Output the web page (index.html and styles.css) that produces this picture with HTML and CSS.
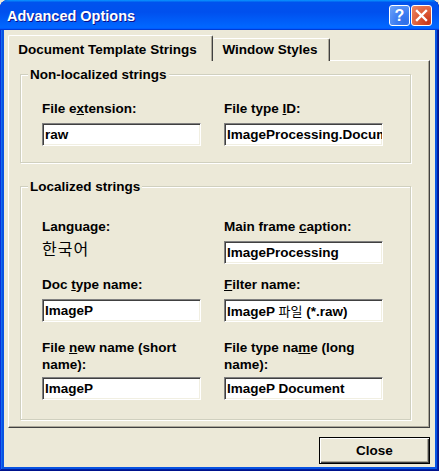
FILE: index.html
```html
<!DOCTYPE html>
<html>
<head>
<meta charset="utf-8">
<title>Advanced Options</title>
<link rel="stylesheet" href="styles.css">
</head>
<body>
<div class="window">
  <div class="titlebar">
    <span class="title">Advanced Options</span>
    <div class="caption-buttons">
      <span class="cbtn help">?</span>
      <span class="cbtn close"><svg width="21" height="21" viewBox="0 0 21 21"><path d="M6 6 L15 15 M15 6 L6 15" stroke="#fff" stroke-width="2.4" stroke-linecap="square" fill="none"/></svg></span>
    </div>
  </div>
  <div class="client">
    <div class="tabs">
      <div class="tab tab-active">Document Template Strings</div>
      <div class="tab tab-second">Window Styles</div>
    </div>
    <div class="panel">
      <fieldset class="group">
        <legend>Non-localized strings</legend>
        <div class="grid grid-top">
          <div class="field">
            <div class="label">File e<u>x</u>tension:</div>
            <div class="edit">raw</div>
          </div>
          <div class="field">
            <div class="label">File type <u>I</u>D:</div>
            <div class="edit">ImageProcessing.Document</div>
          </div>
        </div>
      </fieldset>
      <fieldset class="group group-second">
        <legend>Localized strings</legend>
        <div class="grid grid-bottom">
          <div class="field">
            <div class="label">Language:</div>
            <div class="lang">한국어</div>
          </div>
          <div class="field">
            <div class="label">Main frame <u>c</u>aption:</div>
            <div class="edit">ImageProcessing</div>
          </div>
          <div class="field">
            <div class="label">Doc <u>t</u>ype name:</div>
            <div class="edit">ImageP</div>
          </div>
          <div class="field">
            <div class="label"><u>F</u>ilter name:</div>
            <div class="edit">ImageP <span class="ko">파일</span> (*.raw)</div>
          </div>
          <div class="field field-tall">
            <div class="label label-two">File <u>n</u>ew name (short name):</div>
            <div class="edit">ImageP</div>
          </div>
          <div class="field field-tall">
            <div class="label label-two">File type na<u>m</u>e (long name):</div>
            <div class="edit">ImageP Document</div>
          </div>
        </div>
      </fieldset>
    </div>
    <div class="footer">
      <button class="btn" type="button">Close</button>
    </div>
  </div>
</div>
</body>
</html>
```

FILE: styles.css
```css
html, body {
  margin: 0;
  padding: 0;
  background: #ece9d8;
}

.window {
  width: 439px;
  height: 471px;
  box-sizing: border-box;
  display: flex;
  flex-direction: column;
  background: #0753e3;
  border-radius: 8px 8px 0 0;
  overflow: hidden;
  box-shadow: inset -1px -1px #00138c, inset 1px 1px #0831d9, inset -2px -2px #001ea0, inset 2px 2px #166aee;
}

.titlebar {
  flex: none;
  height: 30px;
  box-sizing: border-box;
  display: flex;
  align-items: center;
  justify-content: space-between;
  padding: 0 7px 0 7px;
  background: linear-gradient(180deg, #0997ff, #0053ee 8%, #0050ee 40%, #06f 88%, #06f 93%, #005bff 95%, #003dd7 96%, #003dd7);
}

.title {
  font: bold 14.5px/18px "Liberation Sans", Arial, sans-serif;
  color: #fff;
  text-shadow: 1px 1px #0f1089;
  padding-top: 1px;
}

.caption-buttons {
  display: flex;
  gap: 1px;
  padding-top: 1px;
}

.cbtn {
  width: 21px;
  height: 21px;
  box-sizing: border-box;
  border: 1px solid #fff;
  border-radius: 3px;
  display: flex;
  align-items: center;
  justify-content: center;
  overflow: hidden;
}

.cbtn svg {
  display: block;
  flex: none;
}

.help {
  background: radial-gradient(circle at 80% 85%, #2f6ee8 0%, #3d7df2 40%, #6ea4f8 100%);
  color: #fff;
  font: bold 16px/1 "Liberation Sans", Arial, sans-serif;
}

.close {
  background: radial-gradient(circle at 85% 85%, #c8361b 0%, #dd5a34 45%, #ec8a6a 100%);
}

.client {
  flex: 1;
  margin: 0 4px 4px 4px;
  background: #ece9d8;
  padding: 5px 5px 0 4px;
  display: flex;
  flex-direction: column;
  font: bold 13.5px/17px "Liberation Sans", Arial, "Noto Sans CJK KR", sans-serif;
  color: #000;
}

.tabs {
  display: flex;
  align-items: flex-end;
  height: 26px;
  margin-bottom: -1px;
}

.tab {
  position: relative;
  box-sizing: border-box;
  height: 23px;
  display: flex;
  align-items: center;
  justify-content: center;
  border-top: 1px solid #fff;
  border-left: 1px solid #fff;
  border-right: 1px solid #404040;
  border-radius: 2px 2px 0 0;
  box-shadow: inset -1px 0 #aca899;
  background: #ece9d8;
  padding-bottom: 1px;
  white-space: nowrap;
}

.tab-active {
  width: 205px;
  height: 26px;
  z-index: 1;
  padding-bottom: 0;
  padding-top: 1px;
  padding-right: 6px;
}

.tab-second {
  width: 117px;
  border-left: none;
  padding-right: 2px;
}

.panel {
  flex: none;
  height: 368px;
  box-sizing: border-box;
  border-top: 1px solid #fff;
  border-left: 1px solid #fff;
  border-right: 1px solid #404040;
  border-bottom: 1px solid #404040;
  box-shadow: inset -1px -1px #aca899;
  padding: 5px 0 0 11px;
}

.group {
  margin: 0;
  padding: 0;
  width: 391px;
  box-sizing: border-box;
  border: 1px solid #d0d0bf;
  box-shadow: 1px 1px 0 #fff, inset 1px 1px 0 #fff;
  min-inline-size: 0;
}

.group-second {
  margin-top: 15px;
}

.group legend {
  margin-left: 7px;
  padding: 0 2px;
  background: #ece9d8;
  font: bold 13.5px/17px "Liberation Sans", Arial, sans-serif;
}

.grid {
  display: grid;
  grid-template-columns: 159px 159px;
  column-gap: 23px;
  padding-left: 21px;
}

.grid-top {
  padding-top: 17px;
  padding-bottom: 16px;
}

.grid-bottom {
  padding-top: 23px;
  padding-bottom: 19px;
  row-gap: 12px;
}

.field {
  display: flex;
  flex-direction: column;
}

.field-tall {
  margin-top: 5px;
}

.label {
  margin-bottom: 6px;
  white-space: normal;
}

.label-two {
  margin-bottom: 4px;
  line-height: 17px;
}

.label u {
  text-decoration-thickness: 1px;
  text-underline-offset: 1px;
}

.lang {
  font: 400 16px/20px "Noto Sans CJK KR", sans-serif;
  margin-top: -3px;
  letter-spacing: 1px;
}

.edit {
  height: 23px;
  box-sizing: border-box;
  background: #fff;
  border-top: 1px solid #808080;
  border-left: 1px solid #808080;
  border-right: 1px solid #fff;
  border-bottom: 1px solid #fff;
  box-shadow: inset 1px 1px 0 #404040, inset -1px -1px 0 #f1efe2;
  padding: 1px 1px 0 2px;
  line-height: 19px;
  white-space: nowrap;
  overflow: hidden;
}

.ko {
  font-family: "Noto Sans CJK KR", sans-serif;
  font-weight: 400;
  font-size: 13px;
}

.footer {
  display: flex;
  justify-content: flex-end;
  padding-top: 9px;
}

.btn {
  width: 111px;
  height: 27px;
  box-sizing: border-box;
  margin: 0;
  padding: 0;
  background: #ece9d8;
  border: 1px solid #000;
  box-shadow: inset 1px 1px #fff, inset -1px -1px #404040, inset -2px -2px #aca899;
  font: bold 13.5px/17px "Liberation Sans", Arial, sans-serif;
  color: #000;
}
```
